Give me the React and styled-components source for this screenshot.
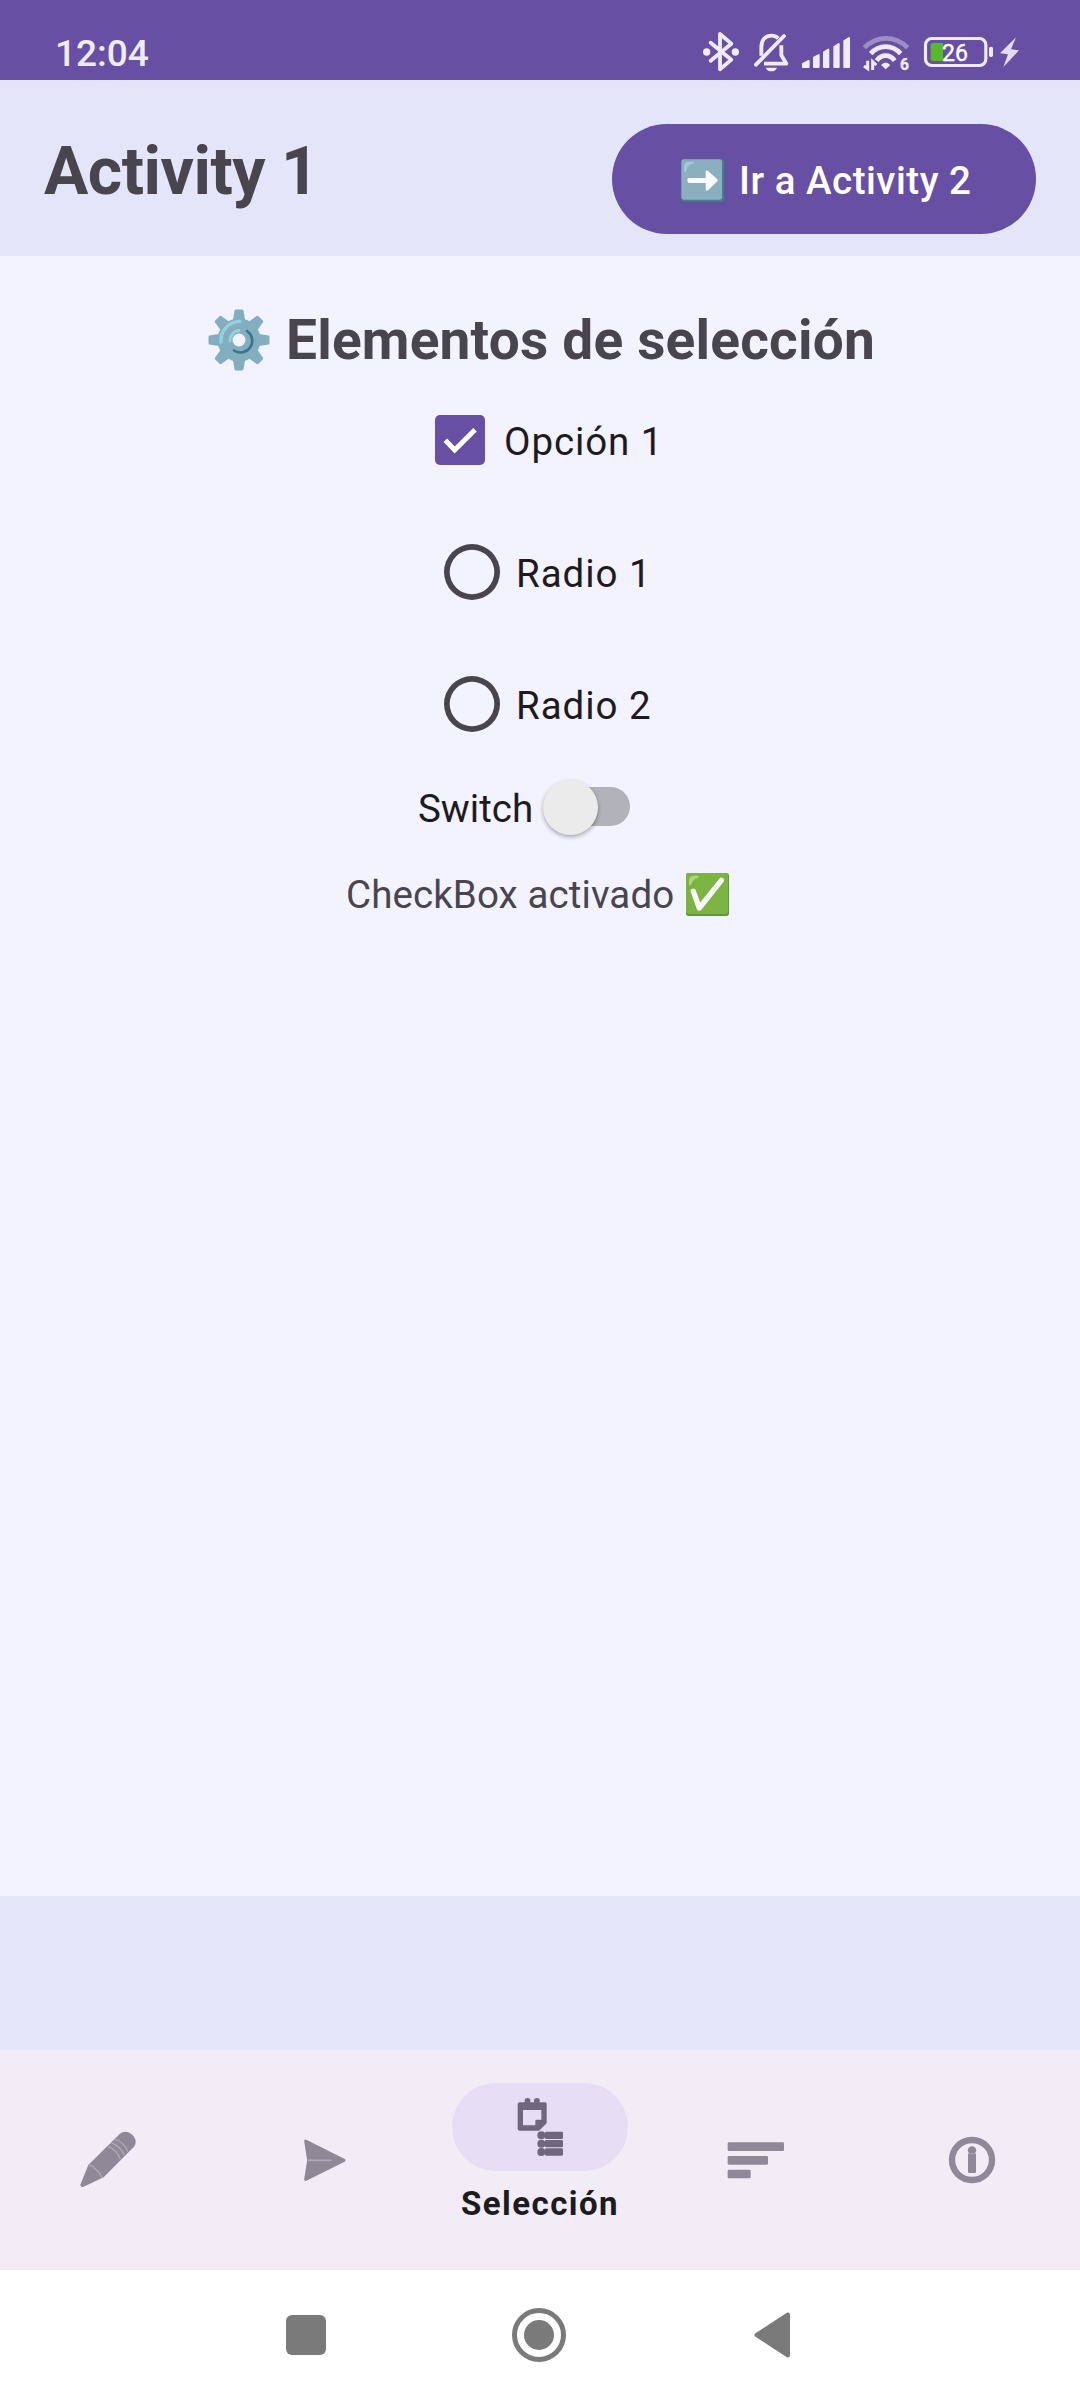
import React from 'react';
import styled, { createGlobalStyle } from 'styled-components';

const Global = createGlobalStyle`
  body { margin: 0; background: #f3f2ff; font-family: Roboto, "Liberation Sans", sans-serif; }
  * { box-sizing: border-box; }
  svg { display: block; flex: none; }
`;

const Screen = styled.div`
  width: 1080px;
  height: 2400px;
  display: flex;
  flex-direction: column;
  background: #f3f2ff;
`;

const StatusBar = styled.div`
  height: 80px;
  background: #674fa3;
  color: #f0ebfa;
  display: flex;
  justify-content: space-between;
  align-items: flex-start;
  padding: 30px 60px 0 55px;
`;

const Clock = styled.span`
  font-size: 37px;
  font-weight: 500;
  line-height: 48px;
`;

const StatusIcons = styled.div`
  display: flex;
`;

const StatusIcon = styled.svg`
  height: 43px;
  width: ${(p) => p.$w}px;
  margin-left: ${(p) => p.$gap || 0}px;
`;

const Header = styled.header`
  height: 176px;
  background: #e4e5f9;
  padding: 44px;
  display: flex;
  justify-content: space-between;
  align-items: flex-start;
`;

const Title = styled.h1`
  margin: 0;
  font-size: 66px;
  font-weight: 700;
  line-height: 95px;
  letter-spacing: -0.5px;
  color: #49454f;
`;

const GoButton = styled.button`
  width: 424px;
  height: 110px;
  border: 0;
  border-radius: 55px;
  background: #674fa3;
  color: #fff;
  font: 500 38.5px/50px Roboto, sans-serif;
  letter-spacing: 0.52px;
  display: flex;
  align-items: center;
  padding: 3px 0 0 69px;
  white-space: nowrap;

  svg { margin: -1px 15px 0 0; }
`;

const Main = styled.main`
  flex: 1;
  padding-top: 50px;
`;

const Heading = styled.h2`
  margin: 0;
  height: 68px;
  padding-left: 207.5px;
  display: flex;
  align-items: center;
  font-size: 55px;
  font-weight: 700;
  line-height: 68px;
  letter-spacing: 0.2px;
  color: #49454f;
  white-space: nowrap;

  svg { margin-right: 16.5px; }
`;

const Row = styled.label`
  height: ${(p) => p.$h || 132}px;
  padding-left: ${(p) => p.$inset}px;
  display: flex;
  align-items: center;
  white-space: nowrap;
`;

const Text = styled.span`
  font-size: 38.5px;
  line-height: 50px;
  padding-top: ${(p) => p.$drop ?? 4}px;
  letter-spacing: ${(p) => p.$track || 0}px;
  color: ${(p) => p.$color || '#1d1b20'};
`;

const Result = styled(Row)`
  gap: 12px;
`;

const CheckBox = styled.span`
  width: 50px;
  height: 50px;
  margin-right: 19px;
  border-radius: 5px;
  background: #674fa3;
`;

const Radio = styled.span`
  width: 56px;
  height: 56px;
  margin-right: 16px;
  box-shadow: inset 0 0 0 5.7px #49454f;
  border-radius: 50%;
`;

const Track = styled.span`
  width: 82px;
  height: 39px;
  margin-left: 15px;
  border-radius: 20px;
  background: #b2b2bb;
  display: flex;
  align-items: center;
`;

const Thumb = styled.span`
  width: 55px;
  height: 55px;
  flex: none;
  margin: 1px 0 0 -5px;
  border-radius: 50%;
  background: #ebebeb;
  box-shadow: 0 2px 4px rgba(0, 0, 0, 0.32);
`;

const Strip = styled.div`
  height: 154px;
  background: #e4e5f9;
`;

const BottomNav = styled.nav`
  height: 220px;
  background: #f2ecf7;
  display: flex;
`;

const NavItem = styled.div`
  width: 216px;
  display: flex;
  flex-direction: column;
  align-items: center;
  justify-content: ${(p) => (p.$active ? 'flex-start' : 'center')};
  padding-top: ${(p) => (p.$active ? 33 : 0)}px;
`;

const Pill = styled.div`
  width: 176px;
  height: 88px;
  border-radius: 44px;
  background: #e7def6;
  display: flex;
  align-items: center;
  justify-content: center;
`;

const NavLabel = styled.span`
  margin-top: 11px;
  font-size: 33px;
  font-weight: 700;
  line-height: 44px;
  letter-spacing: 1.45px;
  color: #1d1b20;
`;

const SystemNav = styled.div`
  height: 130px;
  background: #fff;
  display: flex;
  align-items: center;
  padding-left: 286px;
`;

const SystemSquare = styled.div`
  width: 40px;
  height: 40px;
  border-radius: 6px;
  background: #7a7a7a;
`;

const SystemHome = styled.div`
  width: 54px;
  height: 54px;
  margin-left: 186px;
  border: 5px solid #7a7a7a;
  border-radius: 50%;
  display: flex;
  align-items: center;
  justify-content: center;

  &::after {
    content: '';
    width: 30px;
    height: 30px;
    border-radius: 50%;
    background: #7a7a7a;
  }
`;

const SystemBack = styled.svg`
  width: 38px;
  height: 48px;
  margin-left: 186.5px;
`;

const LIGHT = '#f0ebfa';
const GREY = '#8f8896';

const Bluetooth = () => (
  <StatusIcon $w={38} viewBox="66 60 114 129" fill="none" stroke={LIGHT} strokeWidth="11.5" strokeLinejoin="round" strokeLinecap="round">
    <path d="M92 98L154 149L120 178V72L154 101L92 152" />
    <circle cx="80" cy="126" r="11" fill={LIGHT} stroke="none" />
    <circle cx="166" cy="126" r="11" fill={LIGHT} stroke="none" />
  </StatusIcon>
);

const BellOff = () => (
  <StatusIcon $w={37} $gap={13} viewBox="219 60 111 129" fill="none" stroke={LIGHT} strokeWidth="11.5" strokeLinejoin="round">
    <path d="M244 137V113C244 92 255 77 274 77C283 77 290 80 295 85" />
    <path d="M304 106V136L319 161H252" />
    <path d="M228 164L312 78" strokeLinecap="round" />
    <path d="M257 173H291C288 180 283 184 274 184S260 180 257 173Z" fill={LIGHT} stroke="none" />
  </StatusIcon>
);

const Signal = () => (
  <StatusIcon $w={50} $gap={11} viewBox="363 60 150 129" fill={LIGHT} stroke={LIGHT} strokeWidth="6" strokeLinejoin="round">
    <path d="M369 162L386 153V171H369Z" />
    <path d="M402 143L416 135V171H402Z" />
    <path d="M432 127L445 119V171H432Z" />
    <path d="M463 111L476 102V171H463Z" />
    <path d="M493 93L507 84V171H493Z" />
  </StatusIcon>
);

const Wifi = () => (
  <StatusIcon $w={48} $gap={11} viewBox="6 60 144 129" fill="none" stroke={LIGHT} strokeWidth="14">
    <path d="M13 113Q42 85 78 85T143 113" opacity="0.4" />
    <path d="M32 131Q51 110 77 110T122 131" />
    <path d="M50 152Q61 137 77 137T104 152" />
    <path d="M63 165Q77 150 91 165L77 178Z" fill={LIGHT} stroke="none" />
    <path d="M23 152V176L12 168M38 180V155L49 165" strokeWidth="9" />
    <text x="120" y="180" fontSize="47" fontWeight="700" fill={LIGHT} stroke={LIGHT} strokeWidth="1">6</text>
  </StatusIcon>
);

const Battery = () => (
  <StatusIcon $w={71} $gap={13} viewBox="189 60 213 129">
    <rect x="196.5" y="85.5" width="181" height="81" rx="19" fill="none" stroke={LIGHT} strokeWidth="9.5" />
    <rect x="387" y="110" width="12" height="31" rx="5" fill={LIGHT} />
    <path d="M220 99H249V153H220Q212 153 212 145V107Q212 99 220 99Z" fill="#57bb27" />
    <text x="246" y="152" fontSize="69" fontWeight="400" stroke="#fff" strokeWidth="1.2" fill="#fff">26</text>
  </StatusIcon>
);

const Bolt = () => (
  <StatusIcon $w={21} $gap={5} viewBox="417 60 63 129" fill="#e3dcf3">
    <path d="M468 82L420 130L444 133L430 171L477 121L453 118Z" />
  </StatusIcon>
);

const ArrowEmoji = () => (
  <svg width="43" height="43" viewBox="275 177 129 129">
    <rect x="276" y="178" width="128" height="127" rx="8" fill="#437f90" />
    <rect x="276" y="178" width="122" height="121" rx="8" fill="#8cafbf" />
    <path d="M284 215V199Q284 185 299 185H312Q318 186 312 190Q295 195 291 212Q286 220 284 215Z" fill="#a2c9d8" />
    <path d="M299 234H349V215Q350 209 356 213L384 238Q387 241 384 244L356 271Q350 274 349 268V249H299Q294 248 294 241T299 234Z" fill="#fafafa" />
  </svg>
);

const GearEmoji = () => (
  <svg width="62" height="62" viewBox="-31 -31 62 62">
    <g fill="#82aebf">
      {[0, 45, 90, 135, 180, 225, 270, 315].map((a) => (
        <path key={a} transform={`rotate(${a})`} d="M-6.5 -17L-4.5 -29.5Q-4.3 -30.5 -3 -30.5H3Q4.3 -30.5 4.5 -29.5L6.5 -17Z" />
      ))}
    </g>
    <circle r="14" fill="none" stroke="#82aebf" strokeWidth="15" />
    <path d="M-18 2A19 19 0 0 1 1 -18.5" fill="none" stroke="#94d1e0" strokeWidth="3.4" strokeLinecap="round" />
    <path d="M-9 1A10 10 0 0 1 0 -9.5" fill="none" stroke="#94d1e0" strokeWidth="2.8" strokeLinecap="round" />
    <path d="M8 -9A11.7 11.7 0 0 1 -5 10.5" fill="none" stroke="#35788a" strokeWidth="2.6" strokeLinecap="round" />
  </svg>
);

const CheckEmoji = () => (
  <svg width="43" height="43" viewBox="1071 339 129 129">
    <rect x="1071" y="339" width="129" height="129" rx="8" fill="#5f9936" />
    <rect x="1071" y="339" width="126" height="123" rx="8" fill="#7cb342" />
    <path d="M1080 374V362Q1080 347 1095 347H1106Q1114 349 1107 353Q1091 358 1087 372Q1082 380 1080 374Z" fill="#aed581" />
    <path d="M1093 394L1111 444L1177 361" fill="none" stroke="#fafafa" strokeWidth="16" strokeLinecap="round" strokeLinejoin="round" />
  </svg>
);

const Pencil = () => (
  <svg width="66" height="66" viewBox="75 291 198 198">
    <path d="M91 464L115 405L209 312Q221 301 238 308Q253 316 257 332Q258 343 252 350L161 442L99 471Q91 472 91 464Z" fill={GREY} />
    <g fill="none" stroke="#b0a9b7" strokeWidth="4">
      <path d="M115 405Q130 407 133 415Q148 424 156 443" />
      <path d="M174 349Q202 361 211 387" />
      <path d="M184 338Q212 349 223 376" />
      <path d="M194 327Q223 338 234 365" />
    </g>
  </svg>
);

const Send = () => (
  <svg width="66" height="66" viewBox="723 291 198 198">
    <path d="M767 333L882 391L767 448L776 391Z" fill={GREY} stroke={GREY} strokeWidth="9" strokeLinejoin="round" />
    <path d="M774 391H844" stroke="#b0a9b7" strokeWidth="5" />
  </svg>
);

const Selection = () => (
  <svg width="66" height="66" viewBox="231 191 198 198" fill="#70677f">
    <path fillRule="evenodd" d="M268 216H284V208Q285 203 293 203T301 208V216H312V208Q313 203 321 203T329 208V216H346Q350 217 350 221V279L327 301H268Q263 300 263 295V221Q264 216 268 216ZM279 239V285H316V270Q317 268 320 268H334V239Z" />
    {[315, 340, 365].map((y) => (
      <g key={y}>
        <circle cx="334" cy={y} r="12" />
        <rect x="345" y={y - 11} width="54" height="22" rx="4" />
      </g>
    ))}
  </svg>
);

const Sort = () => (
  <svg width="66" height="66" viewBox="69 291 198 198" fill={GREY}>
    <rect x="83" y="337" width="169" height="26" rx="4" />
    <rect x="83" y="378" width="121" height="26" rx="4" />
    <rect x="83" y="419" width="69" height="26" rx="4" />
  </svg>
);

const Info = () => (
  <svg width="66" height="66" viewBox="717 291 198 198" fill={GREY}>
    <circle cx="816" cy="390" r="60" fill="none" stroke={GREY} strokeWidth="19" />
    <circle cx="816" cy="361" r="12.5" />
    <rect x="804" y="370" width="24" height="59" rx="4" />
    <path d="M805 371H827" stroke="#a9a2b0" strokeWidth="3" />
  </svg>
);

export default function App() {
  return (
    <Screen>
      <Global />
      <StatusBar>
        <Clock>12:04</Clock>
        <StatusIcons>
          <Bluetooth />
          <BellOff />
          <Signal />
          <Wifi />
          <Battery />
          <Bolt />
        </StatusIcons>
      </StatusBar>
      <Header>
        <Title>Activity 1</Title>
        <GoButton>
          <ArrowEmoji />
          Ir a Activity 2
        </GoButton>
      </Header>
      <Main>
        <Heading>
          <GearEmoji />
          Elementos de selección
        </Heading>
        <Row $inset={435}>
          <CheckBox>
            <svg width="50" height="50" viewBox="105 45 150 150">
              <path d="M136 121L164 150L225 89" fill="none" stroke="#fff" strokeWidth="15" />
            </svg>
          </CheckBox>
          <Text $track={0.9}>Opción 1</Text>
        </Row>
        <Row $inset={444}>
          <Radio />
          <Text $track={0.95}>Radio 1</Text>
        </Row>
        <Row $inset={444}>
          <Radio />
          <Text $track={0.95}>Radio 2</Text>
        </Row>
        <Row $h={73} $inset={418}>
          <Text $drop={5}>Switch</Text>
          <Track>
            <Thumb />
          </Track>
        </Row>
        <Result as="div" $h={102} $inset={346}>
          <Text $drop={1} $track={0.1} $color="#49454f">CheckBox activado</Text>
          <CheckEmoji />
        </Result>
      </Main>
      <Strip />
      <BottomNav>
        <NavItem><Pencil /></NavItem>
        <NavItem><Send /></NavItem>
        <NavItem $active>
          <Pill><Selection /></Pill>
          <NavLabel>Selección</NavLabel>
        </NavItem>
        <NavItem><Sort /></NavItem>
        <NavItem><Info /></NavItem>
      </BottomNav>
      <SystemNav>
        <SystemSquare />
        <SystemHome />
        <SystemBack viewBox="0 0 38 48">
          <path d="M3.5 24L35 3.5V44.5Z" fill="#7a7a7a" stroke="#7a7a7a" strokeWidth="4" strokeLinejoin="round" />
        </SystemBack>
      </SystemNav>
    </Screen>
  );
}
